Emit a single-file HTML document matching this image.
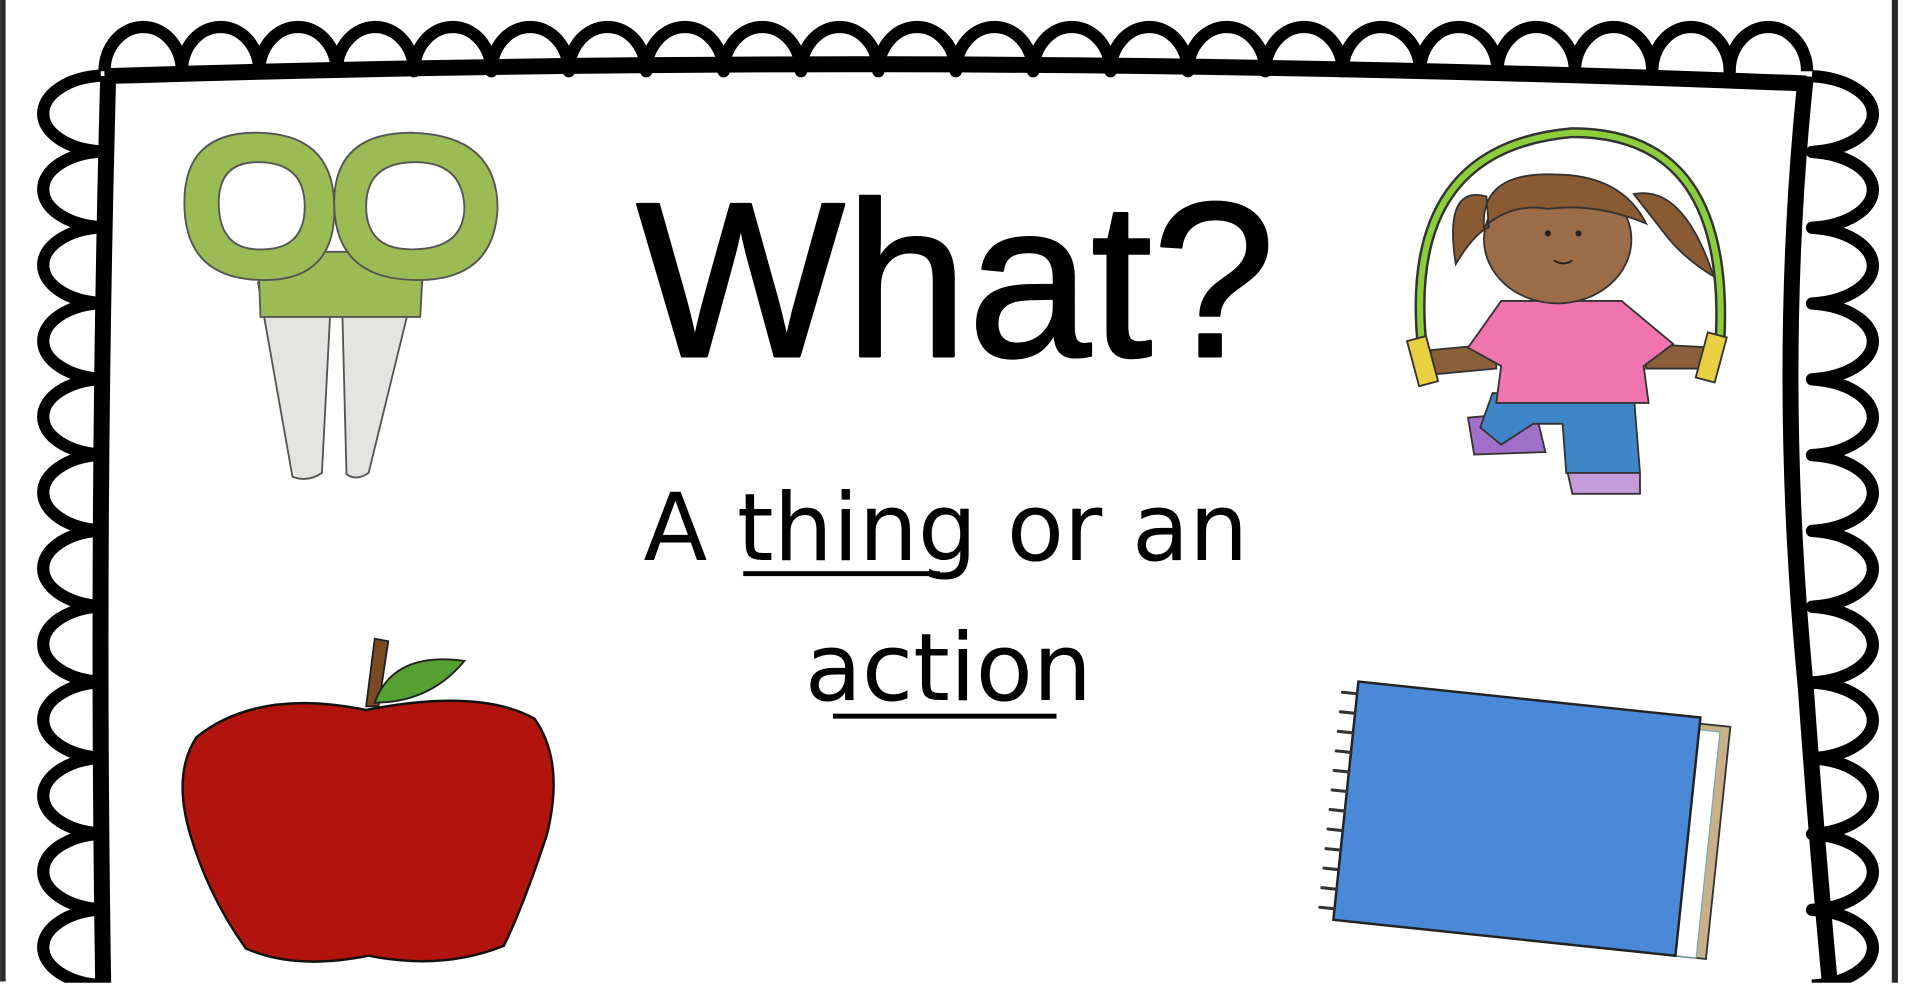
<!DOCTYPE html>
<html><head><meta charset="utf-8"><style>
html,body{margin:0;padding:0;background:#fff;width:1914px;height:995px;overflow:hidden}
svg{display:block}
</style></head><body>
<svg width="1914" height="995" viewBox="0 0 1558 810" xmlns="http://www.w3.org/2000/svg">
<rect width="1558" height="810" fill="#fff"/>
<rect x="1540" y="0" width="5" height="810" fill="#2b2b2b"/>
<g fill="none" stroke="#000" stroke-linejoin="round">
<path stroke-width="10" d="M85 58 a31.5 36 0 0 1 63 0 a31.5 36 0 0 1 63 0 a31.5 36 0 0 1 63 0 a31.5 36 0 0 1 63 0 a31.5 36 0 0 1 63 0 a31.5 36 0 0 1 63 0 a31.5 36 0 0 1 63 0 a31.5 36 0 0 1 63 0 a31.5 36 0 0 1 63 0 a31.5 36 0 0 1 63 0 a31.5 36 0 0 1 63 0 a31.5 36 0 0 1 63 0 a31.5 36 0 0 1 63 0 a31.5 36 0 0 1 63 0 a31.5 36 0 0 1 63 0 a31.5 36 0 0 1 63 0 a31.5 36 0 0 1 63 0 a31.5 36 0 0 1 63 0 a31.5 36 0 0 1 63 0 a31.5 36 0 0 1 63 0 a31.5 36 0 0 1 63 0 a31.5 36 0 0 1 63 0"/>
<path stroke-width="10" d="M82 802 a52 31 0 0 1 0 -61.7 a52 31 0 0 1 0 -61.7 a52 31 0 0 1 0 -61.7 a52 31 0 0 1 0 -61.7 a52 31 0 0 1 0 -61.7 a52 31 0 0 1 0 -61.7 a52 31 0 0 1 0 -61.7 a52 31 0 0 1 0 -61.7 a52 31 0 0 1 0 -61.7 a52 31 0 0 1 0 -61.7 a52 31 0 0 1 0 -61.7 a52 31 0 0 1 0 -61.7"/>
<path stroke-width="10" d="M1475 62 a55 31 0 0 1 0 61.7 a55 31 0 0 1 0 61.7 a55 31 0 0 1 0 61.7 a55 31 0 0 1 0 61.7 a55 31 0 0 1 0 61.7 a55 31 0 0 1 0 61.7 a55 31 0 0 1 0 61.7 a55 31 0 0 1 0 61.7 a55 31 0 0 1 0 61.7 a55 31 0 0 1 0 61.7 a55 31 0 0 1 0 61.7 a55 31 0 0 1 0 61.7"/>
<path stroke-width="13" d="M85 62 Q780 40 1470 68 M88 62 Q78 430 84 805 M1470 62 Q1445 300 1470 560 Q1480 700 1490 805"/>
</g>
<rect x="0" y="800" width="1558" height="10" fill="#fff"/>
<rect x="0" y="0" width="4.5" height="799" fill="#2b2b2b"/>
<!-- scissors -->
<g stroke="#555" stroke-width="1.5">
<path d="M210 230 L270 230 L262 385 Q250 393 238 388 Z" fill="#e4e5e0"/>
<path d="M278 230 L338 230 L300 385 Q290 392 282 386 Z" fill="#e4e5e0"/>
<path d="M210 205 L345 205 L342 258 L212 258 Z" fill="#9bbb55"/>
<path fill="#9bbb55" fill-rule="evenodd" d="M150 165 Q150 108 208 108 Q270 108 272 165 Q275 228 215 228 Q150 228 150 165 Z M178 165 Q178 205 215 203 Q248 202 248 168 Q248 132 210 132 Q178 132 178 165 Z"/>
<path fill="#9bbb55" fill-rule="evenodd" d="M272 165 Q272 108 335 108 Q405 110 405 170 Q402 228 340 228 Q272 228 272 165 Z M298 168 Q298 203 335 203 Q378 203 378 168 Q376 132 338 132 Q298 132 298 168 Z"/>
</g>
<!-- jump rope girl -->
<path d="M1158 285 Q1140 120 1280 108 Q1410 108 1400 280" fill="none" stroke="#333" stroke-width="9"/>
<path d="M1158 285 Q1140 120 1280 108 Q1410 108 1400 280" fill="none" stroke="#8ccd3c" stroke-width="5"/>
<path d="M1195 340 L1250 335 L1258 368 L1200 370 Z" fill="#a070c8" stroke="#333" stroke-width="1.5"/>
<path d="M1275 380 L1335 385 L1335 402 L1280 402 Z" fill="#c49ad8" stroke="#333" stroke-width="1.5"/>
<path d="M1215 320 L1330 322 L1335 385 L1275 385 L1272 345 L1248 345 L1222 362 L1205 348 Z" fill="#3f86c8" stroke="#333" stroke-width="1.5"/>
<path d="M1165 285 L1218 280 L1218 300 L1165 305 Z M1338 280 L1395 283 L1395 300 L1340 300 Z" fill="#8a5f3a" stroke="#333" stroke-width="1.5"/>
<path d="M1222 245 L1320 245 L1362 280 L1338 298 L1342 328 L1218 328 L1222 298 L1195 283 Z" fill="#f075ae" stroke="#333" stroke-width="1.5"/>
<ellipse cx="1268" cy="195" rx="60" ry="52" fill="#9c6c48" stroke="#333" stroke-width="1.5"/>
<path d="M1208 185 Q1205 140 1265 142 Q1320 142 1340 182 Q1300 165 1260 170 Q1230 165 1208 185 Z M1210 160 Q1175 150 1185 215 Q1200 190 1212 185 Z M1330 158 Q1370 150 1395 225 Q1370 210 1355 190 Z" fill="#8a5a33" stroke="#333" stroke-width="1.5"/>
<rect x="1150" y="275" width="16" height="38" fill="#e8d040" stroke="#333" stroke-width="1.5" transform="rotate(-15 1158 294)"/>
<rect x="1385" y="272" width="16" height="38" fill="#e8d040" stroke="#333" stroke-width="1.5" transform="rotate(15 1393 291)"/>
<circle cx="1260" cy="190" r="2.5" fill="#222"/><circle cx="1285" cy="190" r="2.5" fill="#222"/>
<path d="M1265 212 Q1273 217 1280 212" fill="none" stroke="#222" stroke-width="1.5"/>
<!-- apple -->
<path d="M298 575 L305 520 L316 522 L308 575 Z" fill="#7a4a22" stroke="#222" stroke-width="1.5"/>
<path d="M305 572 Q320 530 378 538 Q350 572 305 572 Z" fill="#54a030" stroke="#222" stroke-width="1.5"/>
<path d="M160 600 Q210 560 298 578 Q390 560 435 585 Q460 620 445 680 Q425 740 410 770 Q360 790 300 778 Q240 790 200 772 Q170 730 155 680 Q140 630 160 600 Z" fill="#b0140c" stroke="#111" stroke-width="2"/>
<!-- notebook -->
<g transform="rotate(6 1245 665)">
<rect x="1100" y="575" width="300" height="190" fill="#c8b08a" stroke="#333" stroke-width="1.5"/>
<rect x="1370" y="580" width="22" height="185" fill="#fff" stroke="#7aa" stroke-width="1"/>
<rect x="1095" y="570" width="280" height="195" fill="#4a88d8" stroke="#222" stroke-width="2"/>
<path d="M1095 580 h-12 M1095 596 h-12 M1095 612 h-12 M1095 628 h-12 M1095 644 h-12 M1095 660 h-12 M1095 676 h-12 M1095 692 h-12 M1095 708 h-12 M1095 724 h-12 M1095 740 h-12 M1095 756 h-12" stroke="#333" stroke-width="2.5" stroke-linecap="round"/>
</g>
<!-- text -->
<text x="778" y="290" text-anchor="middle" font-family="Liberation Sans, sans-serif" font-size="180" fill="#000" stroke="#000" stroke-width="2" stroke-linejoin="round">What?</text>
<text x="770" y="456" text-anchor="middle" font-family="DejaVu Sans, sans-serif" font-size="76" fill="#000">A thing or an</text>
<text x="772" y="570" text-anchor="middle" font-family="DejaVu Sans, sans-serif" font-size="76" fill="#000">action</text>
<rect x="605" y="465" width="160" height="4" fill="#000"/>
<rect x="678" y="581" width="182" height="4" fill="#000"/>
</svg>
</body></html>
